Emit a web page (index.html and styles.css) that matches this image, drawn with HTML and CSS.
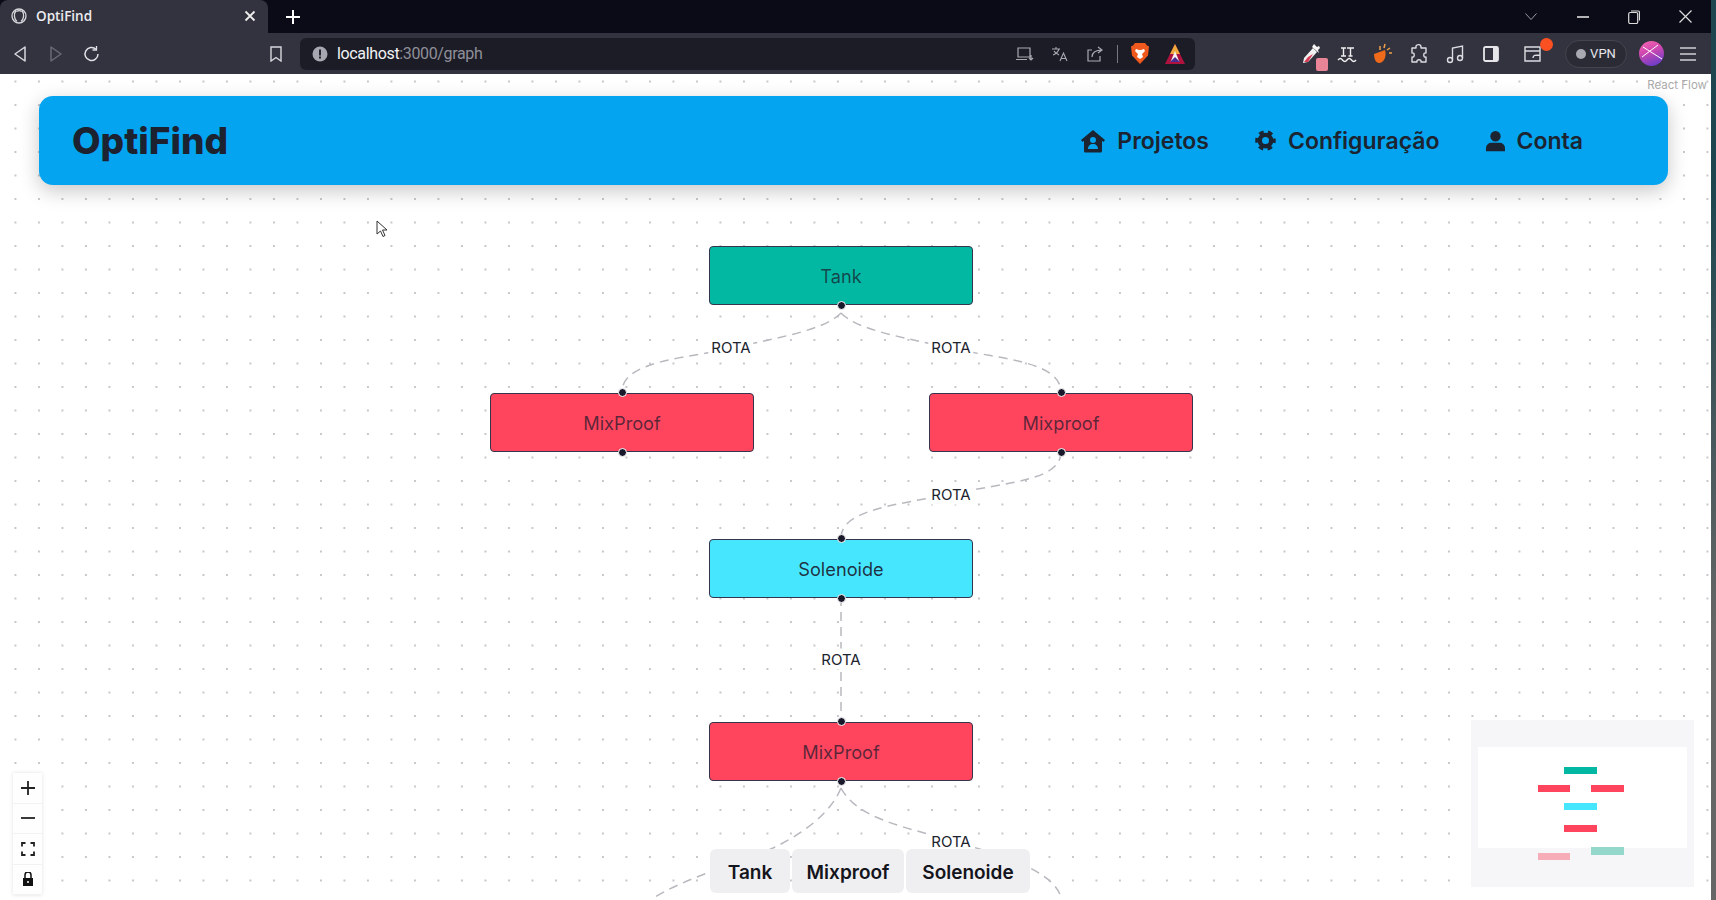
FILE: index.html
```html
<!DOCTYPE html>
<html lang="pt">
<head>
<meta charset="utf-8">
<title>OptiFind</title>
<link rel="stylesheet" href="styles.css">
</head>
<body>
<div class="window">
<div class="tabstrip">
  <div class="tab">
    <svg class="ic16" viewBox="0 0 16 16" fill="none" stroke="#d8d8de" stroke-width="1.3"><circle cx="8" cy="8" r="7"/><path d="M5 2.5C2.5 6 3 11 6 13.6M11 2.5c2.5 3.500 2 8.500-1 11M5.500 3.500C7 2.500 9.500 2.500 10.500 3.500"/></svg>
    <span class="tab-title">OptiFind</span>
    <svg class="tab-close" viewBox="0 0 12 12" stroke="#eee" stroke-width="1.8"><path d="M1.500 1.500l9 9M10.500 1.500l-9 9"/></svg>
  </div>
  <svg class="newtab" viewBox="0 0 14 14" stroke="#fff" stroke-width="2"><path d="M7 0v14M0 7h14"/></svg>
  <div class="winctl">
    <svg class="win-a" viewBox="0 0 12 7" fill="none" stroke="#9a9aa5"><path d="M.5.500l5.500 6 5.500-6"/></svg>
    <svg class="win-b" viewBox="0 0 12 2" stroke="#eee" stroke-width="1.500"><path d="M0 1h12"/></svg>
    <svg class="win-c" viewBox="0 0 12 14" fill="none" stroke="#ddd" stroke-width="1.200"><rect x=".7" y="2.500" width="9" height="11" rx="1.500"/><path d="M3 1h7a1.500 1.500 0 0 1 1.500 1.500v8"/></svg>
    <svg class="win-d" viewBox="0 0 13 13" stroke="#ddd" stroke-width="1.200"><path d="M.5.500l12 12M12.500.500l-12 12"/></svg>
  </div>
</div>

<div class="toolbar">
  <div class="nav-left">
    <svg class="ic18" viewBox="0 0 18 18" fill="none" stroke="#d8d8de" stroke-width="1.500"><path d="M14 2v14L4 9z" stroke-linejoin="round"/></svg>
    <svg class="ic18" viewBox="0 0 18 18" fill="none" stroke="#6a6a76" stroke-width="1.500"><path d="M4 2v14l10-7z" stroke-linejoin="round"/></svg>
    <svg class="ic18" viewBox="0 0 18 18" fill="none" stroke="#e0e0e6" stroke-width="1.500"><path d="M15 9a6.500 6.500 0 1 1-2-4.700"/><path d="M13.500 1v4h-4" stroke-width="1.300"/></svg>
  </div>
  <svg class="bookmark" viewBox="0 0 12 16" fill="none" stroke="#d8d8de" stroke-width="1.400"><path d="M1 1h10v14l-5-3.500L1 15z"/></svg>
  <div class="urlbar">
    <svg class="ic16" viewBox="0 0 16 16"><circle cx="8" cy="8" r="7.500" fill="#a7a7b0"/><path d="M7 3.500h2v6H7zM7 10.500h2v2H7z" fill="#24242e"/></svg>
    <span class="url"><span class="url-host">localhost</span>:3000/graph</span>
    <div class="url-icons">
      <svg class="ic18" viewBox="0 0 18 16" fill="none" stroke="#a9a9b2" stroke-width="1.200"><path d="M14 11V2H2v9zM0 13.500h11M15 9v5M13 12l2 2 2-2"/></svg>
      <svg class="ic18" viewBox="0 0 18 16" fill="none" stroke="#a9a9b2" stroke-width="1.100"><path d="M1 3h8M5 1v2M2 9c3-1 5-3 6-6M3 5c1 2 3 3 5 4M9 15l3.500-8 3.500 8M10.500 12.500h4"/></svg>
      <svg class="ic18" viewBox="0 0 18 16" fill="none" stroke="#a9a9b2" stroke-width="1.200"><path d="M6 4H2v11h12v-5M6 11c0-5 4-7 10-7M12 1l4 3-4 3"/></svg>
      <span class="url-sep"></span>
      <svg class="brave" viewBox="0 0 18 21"><path d="M4 0h10l2 2.500 2 1-1 9-8 8.500-8-8.500-1-9 2-1z" fill="#f0591e"/><path d="M5 6l3 1h2l3-1 1 2-3 3 1 3-3 2-3-2 1-3-3-3z" fill="#fff"/></svg>
      <svg class="aurora" viewBox="0 0 20 20"><path d="M10 0l10 20H0z" fill="#b0123f"/><path d="M10 0l5 10H5z" fill="#f0a93c"/><path d="M10 7l4.500 11h-9z" fill="#f5f5f5"/><path d="M5 18l5-5 5 5z" fill="#4b2d92"/></svg>
    </div>
  </div>
  <div class="ext">
    <span class="ext-item ext-pipette">
      <svg class="ic22" viewBox="0 0 22 22"><path d="M13 5l4 4L8 19l-5 1 1-5z" fill="#f2f2f2"/><path d="M8 14l5-3-5 8-4 0z" fill="#d83a56"/><path d="M14 1l3 3 2-1 1 2-2 2 1 3-7-6z" fill="#f5f5f5"/></svg>
      <span class="ext-badge"></span>
    </span>
    <svg class="ic22" viewBox="0 0 22 18" fill="none" stroke="#f0f0f0" stroke-width="1.400"><path d="M5 3h5M7.500 3v8M5 11h5M11 3h7M14.500 3v8M12.500 11h4M2 15c2-2 3-2 4.500 0s3 2 4.500 0 3-2 4.500 0 3 2 4.500 0"/></svg>
    <svg class="ic22" viewBox="0 0 22 22"><path d="M2 11l11-4c2 6-1 13-6 13-3 0-5-4-5-9z" fill="#ef6a1a"/><path d="M8 3v4M13 1l-1 4M18 5l-3 2M20 10l-3 0" stroke="#f0a04a" stroke-width="1.500"/></svg>
    <svg class="ic22" viewBox="0 0 22 22" fill="none" stroke="#dcdce2" stroke-width="1.400"><path d="M8 3c1-2 5-2 5 1v1h5v5c-3-1-3 5 0 4v5h-5c1-3-5-3-4 0H4v-5c3 1 3-5 0-4V5h4z" stroke-linejoin="round"/></svg>
    <svg class="ic22" viewBox="0 0 22 22" fill="none" stroke="#dcdce2" stroke-width="1.400"><circle cx="6" cy="17" r="2.500"/><circle cx="16" cy="15" r="2.500"/><path d="M8.500 17V5L18.500 3v12"/></svg>
    <svg class="ic22" viewBox="0 0 22 22"><rect x="4" y="4" width="14" height="14" rx="1.500" fill="none" stroke="#e6e6ea" stroke-width="1.800"/><rect x="13" y="4" width="5" height="14" fill="#e6e6ea"/></svg>
    <span class="ext-item ext-wallet">
      <svg class="ic22" viewBox="0 0 22 22" fill="none" stroke="#dcdce2" stroke-width="1.400"><path d="M2 4h15v14H2zM2 8h15M10 15c0-3 2-3 7-3"/></svg>
      <span class="wallet-dot"></span>
    </span>
    <span class="vpn"><span class="vpn-dot"></span>VPN</span>
    <svg class="avatar" viewBox="0 0 25 25" fill="none" stroke="#fff" stroke-width="1"><path d="M3 16L19 4M4 6l19 12"/></svg>
    <svg class="menu" viewBox="0 0 16 14" stroke="#cfcfd6" stroke-width="1.600"><path d="M0 1h16M0 7h16M0 13h16"/></svg>
  </div>
</div>

<main class="flow">
    <span class="attribution">React Flow</span>

    <header class="appbar">
      <h1 class="brand">OptiFind</h1>
      <nav class="appnav">
        <a class="navlink">
          <svg class="nav-ic" viewBox="0 0 24 24"><path fill-rule="evenodd" d="M12 1l12 10-1.500 2-1.500-1.200V22a1.500 1.500 0 0 1-1.500 1.500h-15A1.500 1.500 0 0 1 3 22V11.800L1.500 13 0 11zM12 8a3 3 0 1 0 0 6 3 3 0 0 0 0-6zM7 20h10c0-3-2-5-5-5s-5 2-5 5z" fill="#1b2430"/></svg>
          Projetos
        </a>
        <a class="navlink">
          <svg class="nav-ic nav-gear" viewBox="0 0 24 24" fill="none" stroke="#1b2430"><circle cx="12" cy="12" r="6.500" stroke-width="5"/><circle cx="12" cy="12" r="10" stroke-width="3.500" stroke-dasharray="5.470 5" stroke-dashoffset="2.700"/></svg>
          Configuração
        </a>
        <a class="navlink">
          <svg class="nav-ic nav-user" viewBox="0 0 22 24" fill="#1b2430"><circle cx="11" cy="6.500" r="6"/><path d="M0 24v-3c0-5 3-7 7-7h8c4 0 7 2 7 7v3z"/></svg>
          Conta
        </a>
      </nav>
    </header>

    <svg class="edges" viewBox="0 0 1711 826" aria-hidden="true">
      <g class="edge" transform="translate(0 -74)">
        <path d="M841 313C825 330 780 337 732 348C690 358 622 360 622 392"/>
        <path d="M841 313C857 330 902 337 950 348C992 358 1061 360 1061 392"/>
        <path d="M1061 452C1061 480 1010 482 951 494C895 505 841 510 841 538"/>
        <path d="M841 597V722"/>
        <path d="M841 788C830 815 800 835 773 848C740 862 680 880 652 899"/>
        <path d="M841 788C855 815 895 825 932 835C975 847 1010 858 1030 868C1050 878 1061 890 1061 900"/>
      </g>
    </svg>

    <span class="edge-label label-a">ROTA</span>
    <span class="edge-label label-b">ROTA</span>
    <span class="edge-label label-c">ROTA</span>
    <span class="edge-label label-d">ROTA</span>
    <span class="edge-label label-e">ROTA</span>

    <div class="node teal n-tank">Tank<i class="h h-bottom"></i></div>
    <div class="node red n-mixl">MixProof<i class="h h-top"></i><i class="h h-bottom"></i></div>
    <div class="node red n-mixr">Mixproof<i class="h h-top"></i><i class="h h-bottom"></i></div>
    <div class="node cyan n-sol">Solenoide<i class="h h-top"></i><i class="h h-bottom"></i></div>
    <div class="node red n-mixb">MixProof<i class="h h-top"></i><i class="h h-bottom"></i></div>

    <div class="controls">
      <button class="ctl"><svg viewBox="0 0 14 14" stroke="#222" stroke-width="1.800"><path d="M7 0v14M0 7h14"/></svg></button>
      <button class="ctl"><svg viewBox="0 0 14 14" stroke="#222" stroke-width="1.800"><path d="M0 7h14"/></svg></button>
      <button class="ctl"><svg viewBox="0 0 14 14" fill="none" stroke="#222" stroke-width="1.800"><path d="M1 4.500V1h3.500M9.500 1H13v3.500M13 9.500V13H9.500M4.500 13H1V9.500"/></svg></button>
      <button class="ctl"><svg viewBox="0 0 14 14"><path d="M2 6h10v8H2z" fill="#111"/><path d="M4 6V3a3 3 0 0 1 6 0v3" fill="none" stroke="#111" stroke-width="1.500"/><circle cx="7" cy="10" r="1" fill="#fff"/></svg></button>
    </div>

    <div class="palette">
      <button class="pal-item pal-tank">Tank</button>
      <button class="pal-item pal-mix">Mixproof</button>
      <button class="pal-item pal-sol">Solenoide</button>
    </div>

    <svg class="minimap" viewBox="0 0 223 167" aria-hidden="true">
      <rect width="223" height="167" fill="#f6f5f8"/>
      <rect x="7" y="27" width="209" height="101" fill="#fff"/>
      <rect x="93" y="47" width="33" height="7" fill="#03b8a3"/>
      <rect x="67" y="65" width="32" height="7" fill="#ff455e"/>
      <rect x="120" y="65" width="33" height="7" fill="#ff455e"/>
      <rect x="93" y="83" width="33" height="7" fill="#46e6ff"/>
      <rect x="93" y="105" width="33" height="7" fill="#ff455e"/>
      <rect x="120" y="127" width="33" height="8" fill="#94d8cb"/>
      <rect x="67" y="133" width="32" height="7" fill="#f6adb8"/>
    </svg>

    <svg class="cursor" viewBox="0 0 12 18"><path d="M1 1v13l3.500-3 2.500 5.500 2-1L6.500 10H11z" fill="#fff" stroke="#333" stroke-width="1"/></svg>
</main>
</div>
<div class="rail"></div>
</body>
</html>
```

FILE: styles.css
```css
* { box-sizing: border-box; }
html, body { margin: 0; height: 100%; overflow: hidden; }
body {
  width: 1716px;
  height: 900px;
  display: flex;
  background: #fff;
  font-family: Inter, "Liberation Sans", sans-serif;
}
svg { display: block; flex: none; }
.window {
  width: 1711px;
  flex: none;
  display: flex;
  flex-direction: column;
}
.rail {
  flex: 1;
  background: linear-gradient(#1d4650 0, #1d4650 20%, #666 70%);
}

/* Browser chrome */
.tabstrip {
  height: 33px;
  flex: none;
  display: flex;
  align-items: center;
  background: #0b0a17;
}
.tab {
  width: 268px;
  height: 33px;
  display: flex;
  align-items: center;
  padding: 0 12px 2px 11px;
  background: #33333f;
  border-radius: 8px 8px 0 0;
}
.tab-title {
  flex: 1;
  margin-left: 9px;
  color: #ececf0;
  font: 600 13.500px "Open Sans", sans-serif;
}
.tab-close { width: 12px; height: 12px; }
.newtab { width: 14px; height: 14px; margin-left: 18px; }
.ic16 { width: 16px; height: 16px; }
.ic18 { width: 18px; height: 18px; }
.ic22 { width: 22px; height: 22px; }
.winctl {
  margin-left: auto;
  display: flex;
  align-items: center;
  padding-right: 19px;
}
.win-a { width: 12px; height: 7px; }
.win-b { width: 12px; height: 2px; margin-left: 40px; }
.win-c { width: 12px; height: 14px; margin-left: 39px; }
.win-d { width: 13px; height: 13px; margin-left: 39px; }

.toolbar {
  height: 41px;
  flex: none;
  display: flex;
  align-items: center;
  background: #33333f;
  padding-left: 11px;
}
.nav-left {
  display: flex;
  gap: 18px;
}
.bookmark { width: 12px; height: 16px; margin-left: 169px; }
.urlbar {
  width: 895px;
  height: 32px;
  margin-left: 18px;
  display: flex;
  align-items: center;
  padding: 0 10px 0 12px;
  background: #1c1c26;
  border-radius: 6px;
}
.url {
  margin-left: 9px;
  color: #8f8f99;
  font: 400 16px Roboto, sans-serif;
  letter-spacing: -.35px;
}
.url-host { color: #f2f2f4; }
.url-icons {
  margin-left: auto;
  display: flex;
  align-items: center;
  gap: 17px;
}
.url-sep { width: 1px; height: 18px; background: #77777f; margin: 0 -4px; }
.brave { width: 18px; height: 21px; }
.aurora { width: 20px; height: 20px; margin-left: -1px; }
.ext {
  margin-left: 105px;
  display: flex;
  align-items: center;
  gap: 14px;
}
.ext-item { position: relative; display: block; }
.ext-badge {
  position: absolute;
  right: -6px;
  bottom: -6px;
  width: 12px;
  height: 13px;
  border-radius: 2px;
  background: #e98596;
}
.ext-wallet { margin-left: 7px; }
.wallet-dot {
  position: absolute;
  right: -8px;
  top: -5px;
  width: 13px;
  height: 13px;
  border-radius: 50%;
  background: #fa5022;
}
.vpn {
  width: 62px;
  height: 28px;
  margin-left: 6px;
  display: flex;
  align-items: center;
  justify-content: center;
  gap: 4px;
  border: 1px solid #45454f;
  border-radius: 14px;
  background: #2b2b36;
  color: #e6e6ea;
  font: 400 13px Roboto, sans-serif;
}
.vpn-dot { width: 10px; height: 10px; border-radius: 50%; background: #a9a9b2; }
.avatar {
  width: 25px;
  height: 25px;
  margin-left: -2px;
  border-radius: 50%;
  background: linear-gradient(160deg, #f060b0 10%, #d048b0 40%, #6a3cc8 90%);
}
.menu { width: 16px; height: 14px; margin-left: 2px; }

/* Page */
.flow {
  position: relative;
  flex: 1;
  overflow: hidden;
  padding: 22px 43px 0 39px;
  background-color: #fff;
  background-image: radial-gradient(circle, #c6c6cc 0.7px, transparent 1.100px);
  background-size: 23.500px 23.500px;
  background-position: 3.700px -4.250px;
}
.attribution {
  position: absolute;
  top: 4px;
  right: 4px;
  color: #aaa;
  font: 400 11.500px Inter, sans-serif;
}

.appbar {
  height: 89px;
  display: flex;
  align-items: center;
  justify-content: space-between;
  padding: 0 85px 0 33px;
  background: #05a4f0;
  border-radius: 14px;
  box-shadow: 0 6px 20px rgba(0, 0, 0, .22);
}
.brand {
  margin: 0;
  color: #1c2230;
  font: 800 37px Inter, sans-serif;
}
.appnav { display: flex; align-items: center; gap: 46px; }
.navlink {
  display: flex;
  align-items: center;
  gap: 12px;
  color: #1b2430;
  font: 600 23px Inter, sans-serif;
}
.nav-ic { width: 24px; height: 24px; }
.nav-gear { width: 21px; height: 21px; }
.nav-user { width: 19px; height: 22px; }

/* Diagram */
.edges {
  position: absolute;
  left: 0;
  top: 0;
  width: 1711px;
  height: 826px;
  pointer-events: none;
}
.edge path {
  fill: none;
  stroke: #b8b8bf;
  stroke-width: 1.500;
  stroke-dasharray: 9 6;
}
.edge-label {
  position: absolute;
  transform: translate(-50%, -50%);
  padding: 1px 3px;
  background: #fff;
  color: #20242e;
  font: 400 15px Inter, sans-serif;
}
.label-a { left: 731px; top: 273px; }
.label-b { left: 951px; top: 273px; }
.label-c { left: 951px; top: 420px; }
.label-d { left: 841px; top: 585px; }
.label-e { left: 951px; top: 767px; }

.node {
  position: absolute;
  width: 264px;
  height: 59px;
  display: flex;
  align-items: center;
  justify-content: center;
  border: 1px solid #34344c;
  border-radius: 4px;
  color: rgba(26, 25, 43, .72);
  font: 400 18.200px Inter, sans-serif;
}
.teal { background: #03b8a3; }
.red { background: #ff455e; }
.cyan { background: #46e6ff; color: rgba(26, 25, 43, .9); }
.n-tank { left: 709px; top: 172px; }
.n-mixl { left: 490px; top: 319px; }
.n-mixr { left: 929px; top: 319px; }
.n-sol { left: 709px; top: 465px; }
.n-mixb { left: 709px; top: 648px; }
.h {
  position: absolute;
  left: 50%;
  width: 9px;
  height: 9px;
  margin-left: -4.500px;
  background: #1a192b;
  border: 1px solid #fff;
  border-radius: 50%;
}
.h-top { top: -6px; }
.h-bottom { bottom: -6px; }

.controls {
  position: absolute;
  left: 13px;
  top: 699px;
  width: 29px;
  display: flex;
  flex-direction: column;
  box-shadow: 0 0 4px rgba(0, 0, 0, .12);
}
.ctl {
  width: 29px;
  height: 30.500px;
  padding: 0;
  display: flex;
  align-items: center;
  justify-content: center;
  background: #fefefe;
  border: 0;
  border-bottom: 1px solid #f2f2f2;
}
.ctl svg { width: 14px; height: 14px; }

.palette {
  position: absolute;
  left: 710px;
  top: 775px;
  display: flex;
  gap: 2px;
}
.pal-item {
  height: 44px;
  padding: 2px 0 0;
  border: 0;
  border-radius: 6px;
  background: #efeff1;
  color: #14141c;
  font: 600 19px Inter, sans-serif;
}
.pal-tank { width: 80px; }
.pal-mix { width: 112px; }
.pal-sol { width: 124px; }

.minimap {
  position: absolute;
  left: 1471px;
  top: 646px;
  width: 223px;
  height: 167px;
}
.cursor {
  position: absolute;
  left: 376px;
  top: 146px;
  width: 12px;
  height: 18px;
}
```
